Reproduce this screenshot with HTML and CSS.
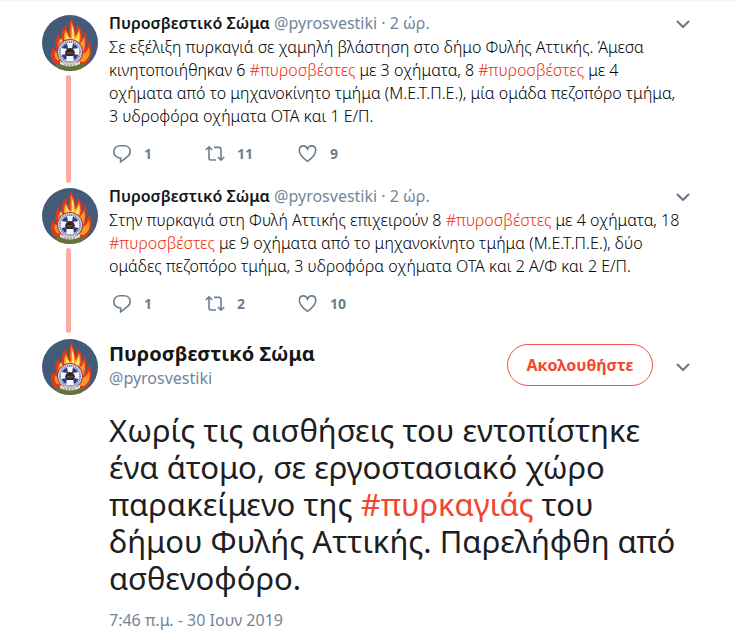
FILE: index.html
```
<!DOCTYPE html>
<html lang="el">
<head>
    <meta charset="UTF-8">
    <meta name="viewport" content="width=device-width, initial-scale=1.0">
    <title>Πυροσβεστικό Σώμα</title>
    <link rel="stylesheet" href="styles.css">
</head>
<body>
    <!-- shared icons -->
    <svg class="sprite" width="0" height="0" aria-hidden="true">
        <symbol id="badge" viewBox="0 0 56 56">
            <circle cx="28" cy="28" r="28" fill="#435a78"/>
            <path d="M13 49 C8 43 7 38 12 31 C12 35 14 36 15 37 C12 28 13 24 17 18 C17 23 18 25 20 27 C18 19 20 13 25 9 C24 13 25 16 27 18 C27 12 27 7 29 3 C31 8 34 11 33 17 C35 15 36 12 35 9 C40 14 41 18 40 23 C42 21 42 19 42 16 C46 23 45 29 43 34 C46 31 47 28 47 25 C51 33 50 44 43 50 Z" fill="#dc3a1c"/>
            <path d="M15 45 C12 42 12 38 14 36 C15 39 17 39 18 39 C15 32 16 27 18 24 C19 28 21 30 23 30 C21 23 22 18 24 15 C25 20 27 23 29 22 C28 17 29 13 29 7 C32 12 33 17 31 23 C34 21 36 18 37 14 C39 20 39 24 37 29 C40 27 41 25 42 22 C44 30 42 36 40 39 C44 38 46 35 47 32 C49 40 46 44 42 47 Z" fill="#f79a25"/>
            <path d="M20 31 C17 27 19 23 19 23 C21 28 23 29 24 28 C23 23 24 19 25 17 C26 24 29 25 30 23 C30 19 30 15 30 11 C33 17 33 22 32 25 C35 23 36 20 37 17 C38 24 37 28 34 31 Z" fill="#ffe263"/>
            <path d="M12 50 Q28 43 44 50 L39 54 Q28 58 17 54 Z" fill="#66713b"/>
            <circle cx="28" cy="37" r="13" fill="#a9324b"/>
            <circle cx="28" cy="37" r="12" fill="#d3d6e2"/>
            <circle cx="28" cy="37" r="10" fill="none" stroke="#6974a0" stroke-width="2" stroke-dasharray="1 1"/>
            <circle cx="28" cy="37" r="9" fill="#2c3a86"/>
            <path d="M25 28 H31 L30 34 L37 33 V40 L31 39 L32 46 H24 L25 39 L19 40 V33 L26 34 Z" fill="#f4f6fb"/>
            <path d="M23 38 Q24 33 28 33 Q32 33 33 38 L31 41 H25 Z" fill="#35261f"/>
            <path d="M25 38 H31" stroke="#8a6444" stroke-width="1"/>
            <path d="M18 46 Q28 52 38 46 V49 Q28 54 18 49 Z" fill="#e4dfd1"/>
            <path d="M22 50 H34" stroke="#7b7f95" stroke-width="1" stroke-dasharray="2 1"/>
        </symbol>
        <symbol id="reply" viewBox="0 0 20 20">
            <path d="M8 1.8 H12 C15.8 1.8 18.2 4.2 18.2 7.5 C18.2 10 17 11.8 14.8 13.2 L8.6 17.8 V14 C4.4 14 1.8 11.3 1.8 7.7 C1.8 4.3 4.4 1.8 8 1.8 Z"/>
        </symbol>
        <symbol id="retweet" viewBox="0 0 20 20">
            <path d="M0.8 6 L4 2.8 L7.2 6 M4 3 V14 Q4 16 6 16 H11 M9 3.4 H14 Q16 3.4 16 5.4 V16 M12.8 13 L16 16.2 L19.2 13"/>
        </symbol>
        <symbol id="heart" viewBox="0 0 20 20">
            <path d="M9.5 17.4 C5 14 1.3 10.3 1.3 6.4 C1.3 3.7 3.1 1.9 5.4 1.9 C7.4 1.9 8.8 3 9.5 4.9 C10.2 3 11.6 1.9 13.6 1.9 C15.9 1.9 17.7 3.7 17.7 6.4 C17.7 10.3 14 14 9.5 17.4 Z"/>
        </symbol>
        <symbol id="caret" viewBox="0 0 14 8">
            <path d="M1 1 L7 7 L13 1"/>
        </symbol>
    </svg>

    <main class="thread">
        <article class="tweet">
            <div class="side">
                <svg class="avatar"><use href="#badge"/></svg>
                <div class="line"></div>
            </div>
            <div class="content">
                <header class="tweet-header">
                    <div><b class="name">Πυροσβεστικό Σώμα</b> <span class="meta">@pyrosvestiki · 2 ώρ.</span></div>
                    <button class="more" aria-label="Περισσότερα"><svg class="caret"><use href="#caret"/></svg></button>
                </header>
                <p class="text">Σε εξέλιξη πυρκαγιά σε χαμηλή βλάστηση στο δήμο Φυλής Αττικής. Άμεσα<br>
                    κινητοποιήθηκαν 6 <a href="#">#πυροσβέστες</a> με 3 οχήματα, 8 <a href="#">#πυροσβέστες</a> με 4<br>
                    οχήματα από το μηχανοκίνητο τμήμα (Μ.Ε.Τ.Π.Ε.), μία ομάδα πεζοπόρο τμήμα,<br>
                    3 υδροφόρα οχήματα ΟΤΑ και 1 Ε/Π.</p>
                <div class="actions">
                    <button class="action"><svg class="icon"><use href="#reply"/></svg>1</button>
                    <button class="action"><svg class="icon"><use href="#retweet"/></svg>11</button>
                    <button class="action"><svg class="icon"><use href="#heart"/></svg>9</button>
                </div>
            </div>
        </article>

        <article class="tweet">
            <div class="side">
                <svg class="avatar"><use href="#badge"/></svg>
                <div class="line"></div>
            </div>
            <div class="content">
                <header class="tweet-header">
                    <div><b class="name">Πυροσβεστικό Σώμα</b> <span class="meta">@pyrosvestiki · 2 ώρ.</span></div>
                    <button class="more" aria-label="Περισσότερα"><svg class="caret"><use href="#caret"/></svg></button>
                </header>
                <p class="text">Στην πυρκαγιά στη Φυλή Αττικής επιχειρούν 8 <a href="#">#πυροσβέστες</a> με 4 οχήματα, 18<br>
                    <a href="#">#πυροσβέστες</a> με 9 οχήματα από το μηχανοκίνητο τμήμα (Μ.Ε.Τ.Π.Ε.), δύο<br>
                    ομάδες πεζοπόρο τμήμα, 3 υδροφόρα οχήματα ΟΤΑ και 2 Α/Φ και 2 Ε/Π.</p>
                <div class="actions">
                    <button class="action"><svg class="icon"><use href="#reply"/></svg>1</button>
                    <button class="action"><svg class="icon"><use href="#retweet"/></svg>2</button>
                    <button class="action"><svg class="icon"><use href="#heart"/></svg>10</button>
                </div>
            </div>
        </article>

        <article class="main-tweet">
            <header class="main-header">
                <svg class="avatar"><use href="#badge"/></svg>
                <div class="user">
                    <b class="main-name">Πυροσβεστικό Σώμα</b>
                    <span class="meta">@pyrosvestiki</span>
                </div>
                <button class="follow">Ακολουθήστε</button>
                <button class="more" aria-label="Περισσότερα"><svg class="caret"><use href="#caret"/></svg></button>
            </header>
            <div class="main-body">
                <p class="main-text">Χωρίς τις αισθήσεις του εντοπίστηκε<br>
                    ένα άτομο, σε εργοστασιακό χώρο<br>
                    παρακείμενο της <a href="#">#πυρκαγιάς</a> του<br>
                    δήμου Φυλής Αττικής. Παρελήφθη από<br>
                    ασθενοφόρο.</p>
                <time class="meta" datetime="2019-06-30T07:46">7:46 π.μ. - 30 Ιουν 2019</time>
            </div>
        </article>
    </main>
</body>
</html>
```
FILE: styles.css
```
body {
    margin: 0;
    background-color: #fff;
    color: #14171a;
    font-family: "Noto Sans", "Open Sans", sans-serif;
    font-size: 16px;
    line-height: 23px;
    border-top: 1px solid #f3f5f6;
}

a {
    color: #f2452b;
    text-decoration: none;
}

p {
    margin: 0;
    white-space: nowrap;
}

button {
    padding: 0;
    border: none;
    background: none;
    font-family: inherit;
    cursor: pointer;
}

.sprite {
    display: block;
}

.thread {
    padding: 11px 45px 16px 42px;
}

.tweet {
    display: flex;
    gap: 11px;
}

.side {
    display: flex;
    flex-direction: column;
    align-items: center;
    gap: 4px;
    padding-top: 3px;
}

.avatar {
    display: block;
    flex: none;
    width: 56px;
    height: 56px;
}

.line {
    flex: 1;
    width: 5px;
    margin-bottom: 2px;
    margin-right: 3px;
    border-radius: 3px;
    background-color: #fbaca5;
}

.content {
    flex: 1;
    min-width: 0;
}

.tweet-header {
    display: flex;
    justify-content: space-between;
    align-items: center;
}

.name {
    font-weight: 600;
}

.text {
    margin-top: 1px;
    color: #000;
    font-weight: 300;
}

.text a {
    color: #ee2c10;
}

.meta {
    color: #71869a;
}

.more {
    display: flex;
}

.caret {
    width: 14px;
    height: 8px;
    fill: none;
    stroke: #657786;
    stroke-width: 2;
}

.actions {
    display: flex;
    margin-top: 16px;
    padding: 0 0 21px 3px;
}

.action {
    display: flex;
    align-items: center;
    gap: 12px;
    width: 93px;
    color: #6b7f90;
    font-size: 14px;
    font-weight: bold;
    line-height: 20px;
}

.icon {
    width: 20px;
    height: 20px;
    fill: none;
    stroke: #6b7f90;
    stroke-width: 1.6;
}

.main-header {
    display: flex;
    align-items: center;
    padding-top: 4px;
}

.user {
    display: flex;
    flex-direction: column;
    flex: 1;
    margin: 0 0 4px 11px;
}

.main-name {
    font-size: 20px;
    line-height: 26px;
}

.follow {
    width: 146px;
    height: 42px;
    margin: 0 23px 4px 0;
    border: 1px solid #ee5544;
    border-radius: 21px;
    color: #f0492f;
    font-size: 16px;
    font-weight: bold;
}

.main-body {
    margin-left: 67px;
}

.main-text {
    margin: 17px 0 12px;
    color: #1c2023;
    font-size: 31px;
    line-height: 37px;
}
```
